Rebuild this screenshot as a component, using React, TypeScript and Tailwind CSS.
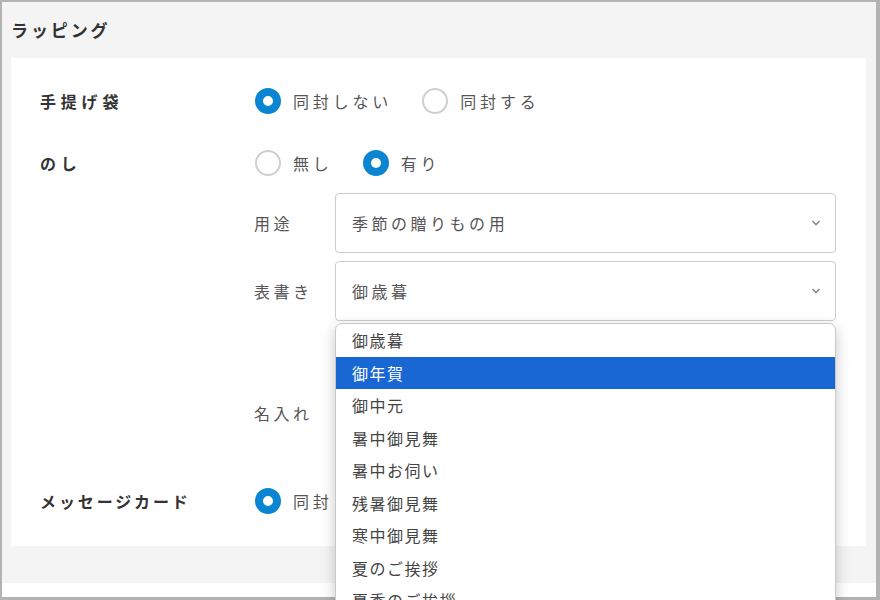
import React from "react";

const FONT = { fontFamily: '"Noto Sans CJK JP", "Noto Sans", sans-serif' };

function Radio({ checked, label }: { checked: boolean; label: string }) {
  return (
    <div className="flex items-center">
      {checked ? (
        <div className="w-[26px] h-[26px] rounded-full border-[8px] border-[#0a85d1] bg-white box-border" />
      ) : (
        <div className="w-[26px] h-[26px] rounded-full border-2 border-[#cfcfcf] bg-white box-border" />
      )}
      <span className="ml-[12px] text-[16px] tracking-[0.24em] text-[#555]">{label}</span>
    </div>
  );
}

function Chevron() {
  return (
    <svg width="10" height="7" viewBox="0 0 10 7" className="absolute right-[14px] top-1/2 -translate-y-1/2">
      <path d="M1.5 1.5 L5 5 L8.5 1.5" fill="none" stroke="#8a8a8a" strokeWidth="1.6" />
    </svg>
  );
}

function SelectBox({ value }: { value: string }) {
  return (
    <div className="relative w-[501px] h-[60px] border border-[#cdcdcd] rounded-[4px] bg-white flex items-center pl-[16px]">
      <span className="text-[16px] tracking-[0.22em] text-[#555]">{value}</span>
      <Chevron />
    </div>
  );
}

const OPTIONS = [
  "御歳暮",
  "御年賀",
  "御中元",
  "暑中御見舞",
  "暑中お伺い",
  "残暑御見舞",
  "寒中御見舞",
  "夏のご挨拶",
  "夏季のご挨拶",
];

export default function App() {
  return (
    <div style={FONT} className="w-[880px] h-[600px] overflow-hidden bg-white">
      <div className="relative w-[880px] h-[600px] box-border border-l-2 border-t-2 border-r-4 border-b-[3px] border-[#b3b3b3] bg-[#f4f4f4] flex flex-col">
        <div className="h-[56px] flex items-center pl-[9px]">
          <span className="text-[17px] font-bold tracking-[0.17em] text-[#333]">ラッピング</span>
        </div>
        <div className="ml-[9px] mr-[10px] h-[488px] bg-white pt-[27px] pl-[29px] flex flex-col">
          <div className="flex h-[32px] items-center">
            <div className="w-[215px] text-[16px] font-bold tracking-[0.3em] text-[#333]">手提げ袋</div>
            <div className="flex items-center gap-[30px]">
              <Radio checked label="同封しない" />
              <Radio checked={false} label="同封する" />
            </div>
          </div>
          <div className="flex h-[32px] items-center mt-[30px]">
            <div className="w-[215px] text-[16px] font-bold tracking-[0.3em] text-[#333]">のし</div>
            <div className="flex items-center gap-[30px]">
              <Radio checked={false} label="無し" />
              <Radio checked label="有り" />
            </div>
          </div>
          <div className="ml-[214px] mt-[14px] flex flex-col">
            <div className="flex items-center">
              <div className="w-[81px] text-[16px] tracking-[0.22em] text-[#555]">用途</div>
              <SelectBox value="季節の贈りもの用" />
            </div>
            <div className="flex items-center mt-[8px]">
              <div className="w-[81px] text-[16px] tracking-[0.22em] text-[#555]">表書き</div>
              <SelectBox value="御歳暮" />
            </div>
            <div className="flex items-center mt-[62px]">
              <div className="w-[81px] text-[16px] tracking-[0.22em] text-[#555]">名入れ</div>
              <div className="w-[501px] h-[60px] border border-[#cdcdcd] rounded-[4px] bg-white" />
            </div>
          </div>
          <div className="flex h-[32px] items-center mt-[42px]">
            <div className="w-[215px] text-[16px] font-bold tracking-[0.18em] text-[#333]">メッセージカード</div>
            <div className="flex items-center gap-[30px]">
              <Radio checked label="同封" />
            </div>
          </div>
        </div>
        <div className="h-[37px] bg-[#f4f4f4]" />
        <div className="flex-1 bg-white" />

        <div className="absolute left-[333px] top-[321px] w-[501px] h-[300px] bg-white border border-[#c9c9c9] rounded-t-[7px] shadow-[0_4px_14px_rgba(0,0,0,0.22)] overflow-hidden">
          {OPTIONS.map((o, i) => (
            <div
              key={o}
              className={
                i === 1
                  ? "h-[32.5px] flex items-center pl-[16px] bg-[#1967d2] text-white text-[16px] tracking-[1.5px]"
                  : "h-[32.5px] flex items-center pl-[16px] text-[#444] text-[16px] tracking-[1.5px]"
              }
            >
              {o}
            </div>
          ))}
        </div>
      </div>
    </div>
  );
}
